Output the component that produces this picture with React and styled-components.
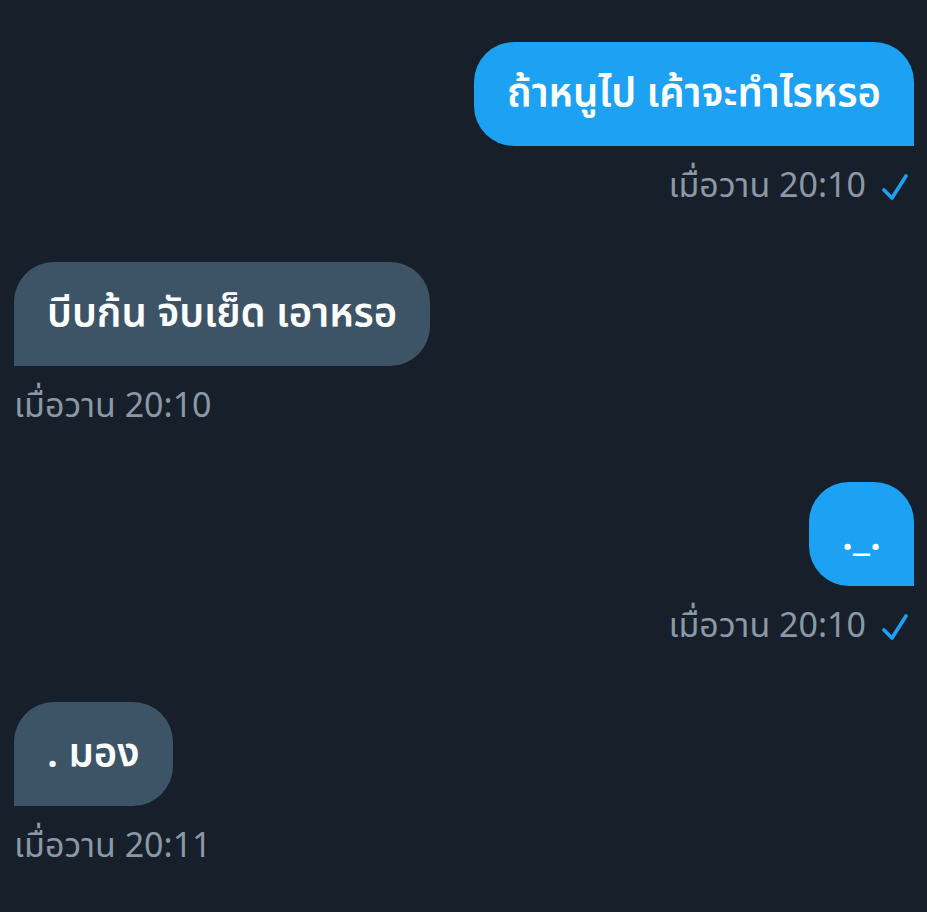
import React from "react";
import styled, { createGlobalStyle } from "styled-components";

const Global = createGlobalStyle`
  html, body { margin: 0; padding: 0; background: #17202a; }
  body { font-family: "Noto Sans", "Noto Sans Thai", "DejaVu Sans", sans-serif; }
`;

const Page = styled.div`
  width: 927px;
  min-height: 912px;
  background: #17202a;
  box-sizing: border-box;
  padding: 42px 13px 0 14px;
  display: flex;
  flex-direction: column;
  gap: 57px;
`;

const Group = styled.div`
  display: flex;
  flex-direction: column;
  align-items: ${(p) => (p.$mine ? "flex-end" : "flex-start")};
`;

const Bubble = styled.div`
  box-sizing: border-box;
  height: 104px;
  padding: 0 33px;
  display: flex;
  align-items: center;
  font-size: 40px;
  font-weight: 600;
  color: #ffffff;
  background: ${(p) => (p.$mine ? "#1da1f2" : "#3d5466")};
  border-radius: ${(p) => (p.$mine ? "40px 40px 0 40px" : "40px 40px 40px 0")};
  white-space: nowrap;
`;

const Meta = styled.div`
  margin-top: 22px;
  height: 37px;
  padding-right: ${(p) => (p.$mine ? "6px" : "0")};
  display: flex;
  align-items: center;
  gap: 15px;
  font-size: 34px;
  color: #8b98a5;
  white-space: nowrap;
`;

const Check = () => (
  <svg width="27" height="28" viewBox="0 0 27 28" fill="none">
    <path d="M3 17 L11 25 L25 3" stroke="#1da1f2" strokeWidth="3.6" strokeLinecap="round" strokeLinejoin="round" />
  </svg>
);

const messages = [
  { mine: true, text: "ถ้าหนูไป เค้าจะทำไรหรอ", time: "เมื่อวาน 20:10" },
  { mine: false, text: "บีบก้น จับเย็ด เอาหรอ", time: "เมื่อวาน 20:10" },
  { mine: true, text: "._.", time: "เมื่อวาน 20:10" },
  { mine: false, text: ". มอง", time: "เมื่อวาน 20:11" },
];

export default function App() {
  return (
    <>
      <Global />
      <Page>
        {messages.map((m, i) => (
          <Group key={i} $mine={m.mine}>
            <Bubble $mine={m.mine}>{m.text}</Bubble>
            <Meta $mine={m.mine}>
              <span>{m.time}</span>
              {m.mine && <Check />}
            </Meta>
          </Group>
        ))}
      </Page>
    </>
  );
}
